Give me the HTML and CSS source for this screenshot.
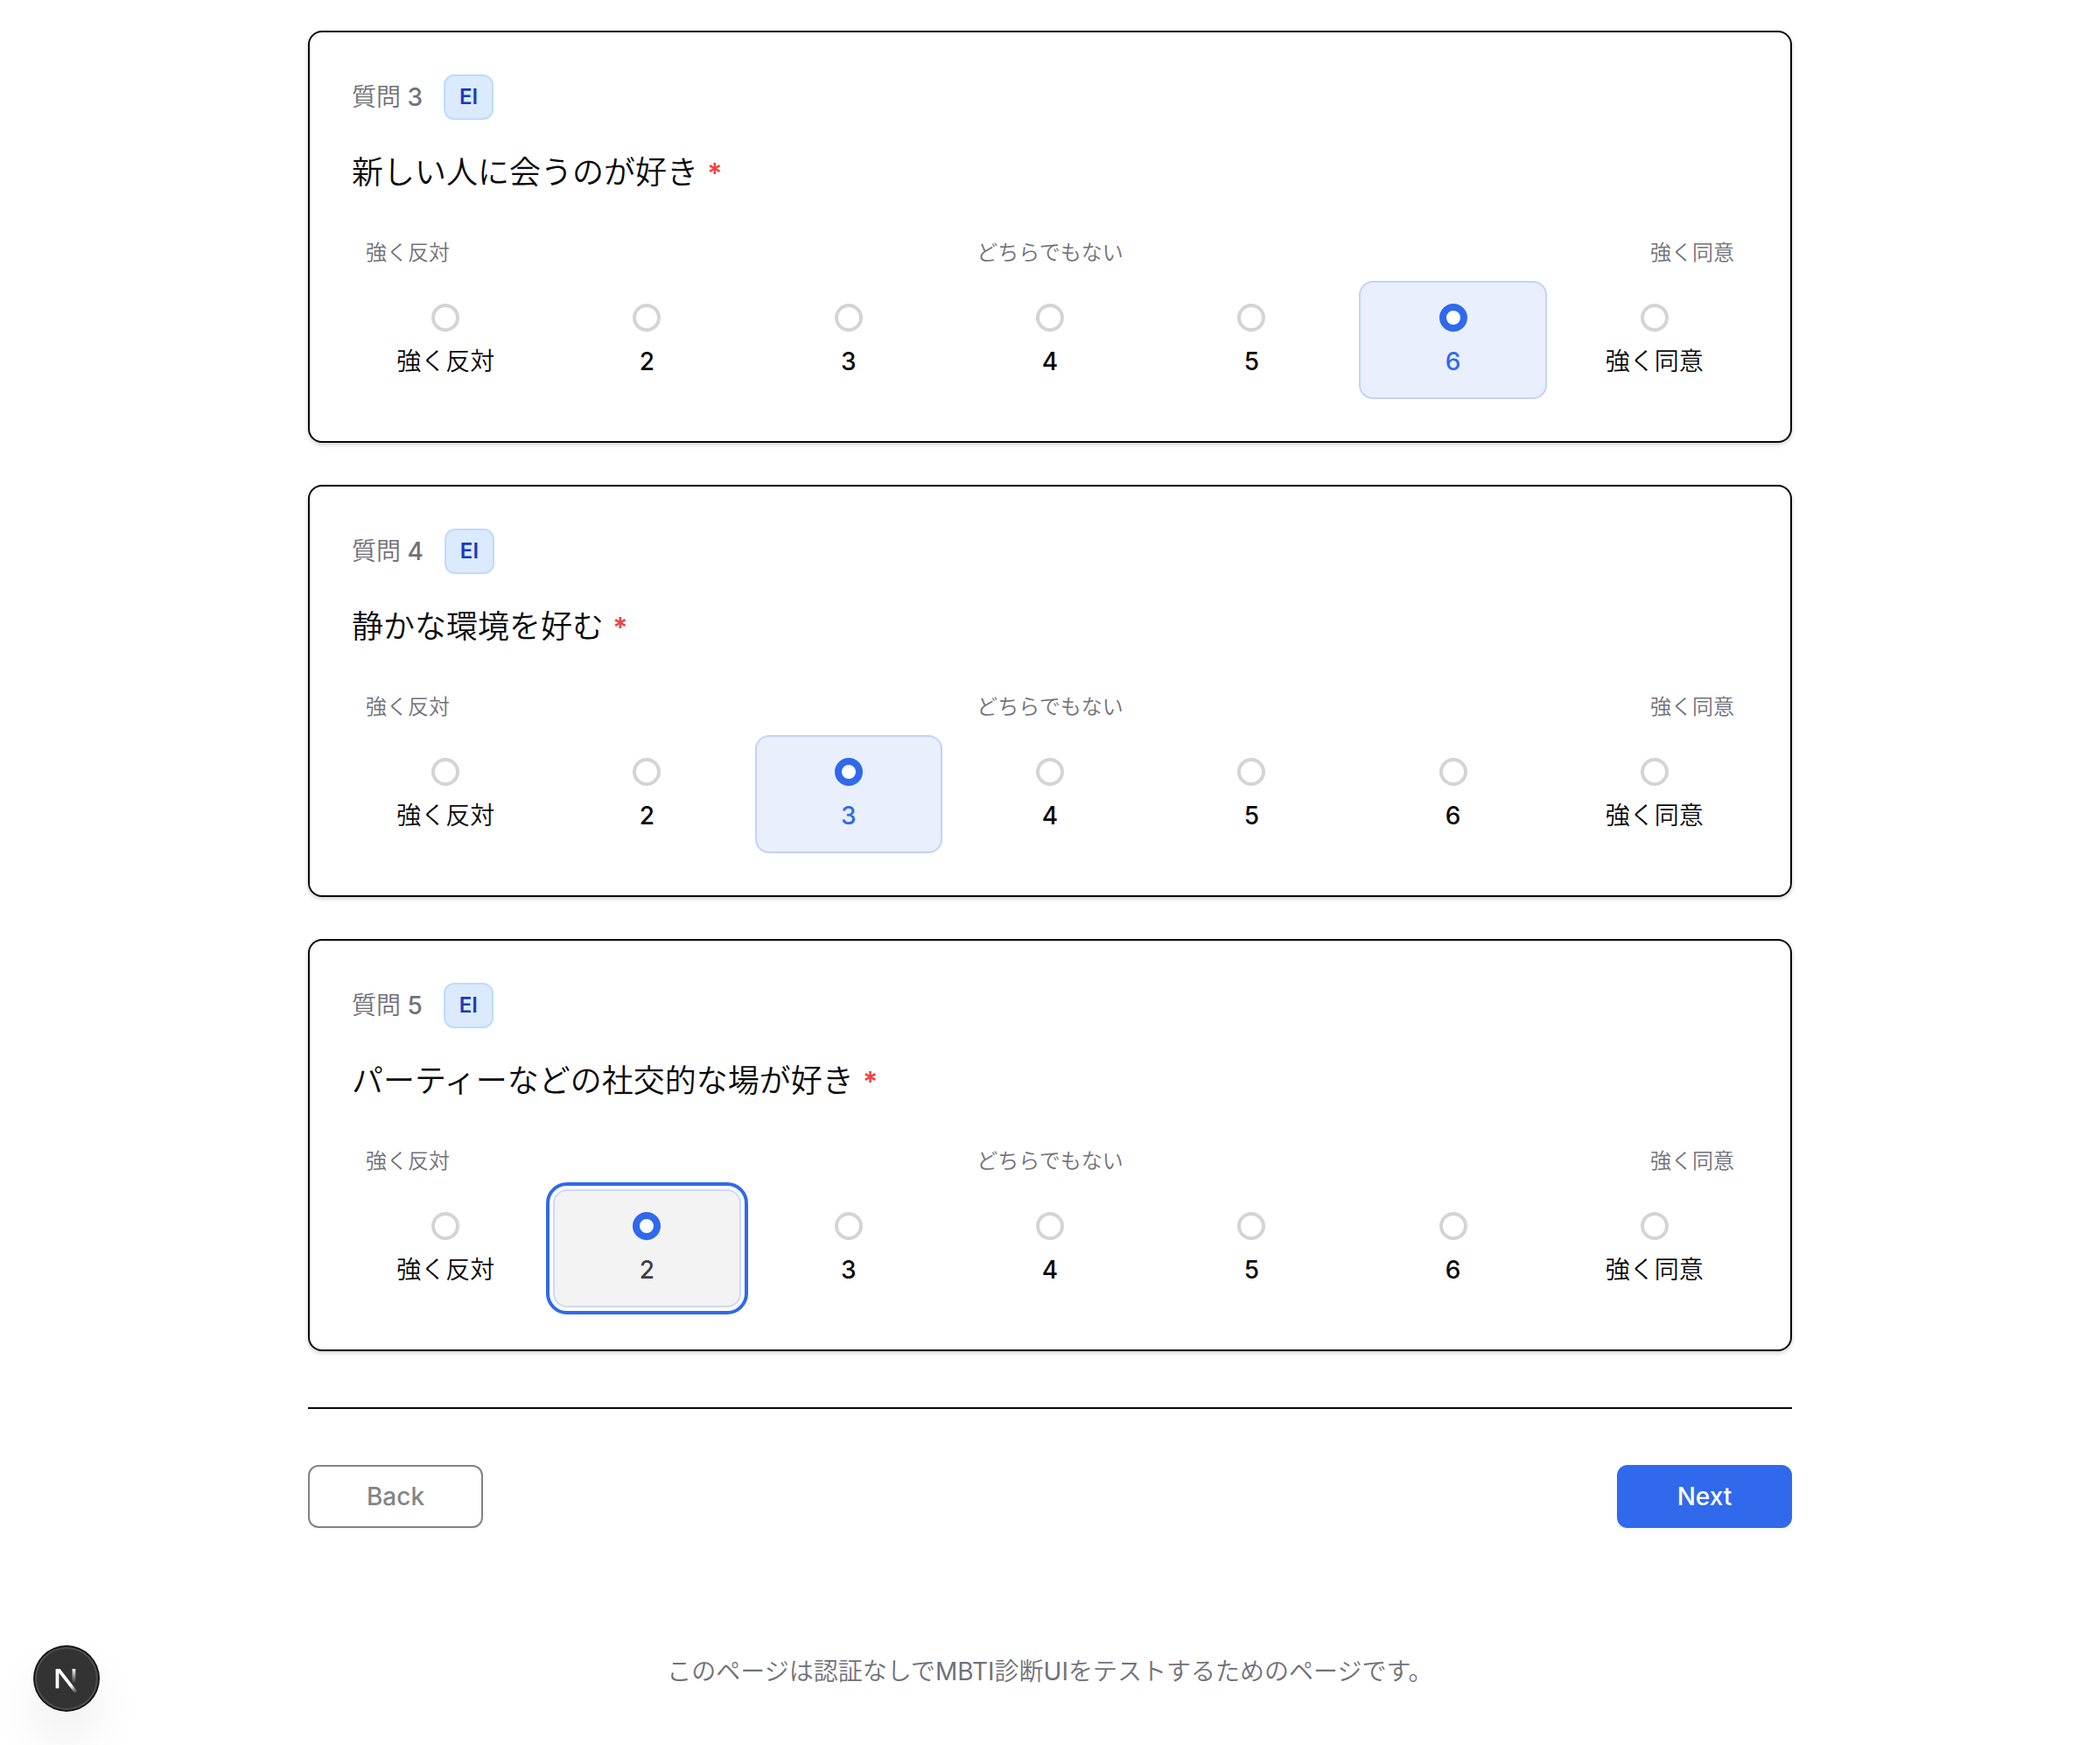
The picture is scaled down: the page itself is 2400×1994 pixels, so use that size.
FILE: index.html
```html
<!DOCTYPE html>
<html lang="ja">
<head>
<meta charset="utf-8">
<meta name="viewport" content="width=device-width, initial-scale=1">
<title>MBTI診断</title>
<link rel="stylesheet" href="styles.css">
</head>
<body>
<main class="page">
  <form class="questions">
    <section class="card">
      <div class="card-head"><span class="number"><span class="ja">質問</span> 3</span><span class="badge">EI</span></div>
      <h2 class="title" id="q3">新しい人に会うのが好き <span class="required">*</span></h2>
      <div class="legend"><span>強く反対</span><span>どちらでもない</span><span>強く同意</span></div>
      <div class="scale" role="radiogroup" aria-labelledby="q3">
        <label class="option ja"><input type="radio" name="q3" value="1">強く反対</label>
        <label class="option"><input type="radio" name="q3" value="2">2</label>
        <label class="option"><input type="radio" name="q3" value="3">3</label>
        <label class="option"><input type="radio" name="q3" value="4">4</label>
        <label class="option"><input type="radio" name="q3" value="5">5</label>
        <label class="option selected"><input type="radio" name="q3" value="6" checked>6</label>
        <label class="option ja"><input type="radio" name="q3" value="7">強く同意</label>
      </div>
    </section>

    <section class="card">
      <div class="card-head"><span class="number"><span class="ja">質問</span> 4</span><span class="badge">EI</span></div>
      <h2 class="title" id="q4">静かな環境を好む <span class="required">*</span></h2>
      <div class="legend"><span>強く反対</span><span>どちらでもない</span><span>強く同意</span></div>
      <div class="scale" role="radiogroup" aria-labelledby="q4">
        <label class="option ja"><input type="radio" name="q4" value="1">強く反対</label>
        <label class="option"><input type="radio" name="q4" value="2">2</label>
        <label class="option selected"><input type="radio" name="q4" value="3" checked>3</label>
        <label class="option"><input type="radio" name="q4" value="4">4</label>
        <label class="option"><input type="radio" name="q4" value="5">5</label>
        <label class="option"><input type="radio" name="q4" value="6">6</label>
        <label class="option ja"><input type="radio" name="q4" value="7">強く同意</label>
      </div>
    </section>

    <section class="card">
      <div class="card-head"><span class="number"><span class="ja">質問</span> 5</span><span class="badge">EI</span></div>
      <h2 class="title" id="q5">パーティーなどの社交的な場が好き <span class="required">*</span></h2>
      <div class="legend"><span>強く反対</span><span>どちらでもない</span><span>強く同意</span></div>
      <div class="scale" role="radiogroup" aria-labelledby="q5">
        <label class="option ja"><input type="radio" name="q5" value="1">強く反対</label>
        <label class="option selected focused"><input type="radio" name="q5" value="2" checked>2</label>
        <label class="option"><input type="radio" name="q5" value="3">3</label>
        <label class="option"><input type="radio" name="q5" value="4">4</label>
        <label class="option"><input type="radio" name="q5" value="5">5</label>
        <label class="option"><input type="radio" name="q5" value="6">6</label>
        <label class="option ja"><input type="radio" name="q5" value="7">強く同意</label>
      </div>
    </section>
  </form>

  <nav class="actions">
    <button class="button back" type="button" disabled>Back</button>
    <button class="button next" type="button">Next</button>
  </nav>

  <footer class="note">このページは認証なしで<span class="latin">MBTI</span>診断<span class="latin">UI</span>をテストするためのページです。</footer>
</main>

<button class="dev-button" type="button" aria-label="Next.js">
  <svg viewBox="0 0 36 36" fill="none" aria-hidden="true">
    <defs>
      <linearGradient id="diagonal" x1="9.956" y1="11.123" x2="15.478" y2="17.967" gradientUnits="userSpaceOnUse">
        <stop stop-color="#fff"/><stop offset="0.604" stop-color="#fff" stop-opacity="0"/><stop offset="1" stop-color="#fff" stop-opacity="0"/>
      </linearGradient>
      <linearGradient id="stem" x1="11.822" y1="1.4" x2="11.791" y2="9.625" gradientUnits="userSpaceOnUse">
        <stop stop-color="#fff"/><stop offset="1" stop-color="#fff" stop-opacity="0"/>
      </linearGradient>
      <mask id="cut"><rect width="20" height="20" fill="#fff"/><rect width="5" height="1.5" fill="#000"/></mask>
    </defs>
    <g transform="translate(10.4 11)" stroke-width="1.86">
      <path d="M13.3 15.2 L2.34 1 V12.6" stroke="url(#diagonal)" mask="url(#cut)"/>
      <path d="M11.825 1.5 V13.1" stroke="url(#stem)"/>
    </g>
  </svg>
</button>
</body>
</html>
```

FILE: styles.css
```css
*,
*::before,
*::after {
  box-sizing: border-box;
}

:root {
  --ink: #09090b;
  --muted: #71717a;
  --primary: #3069ec;
}

body {
  margin: 0;
  background: #fff;
  color: var(--ink);
  font-family: Inter, "Noto Sans CJK JP", sans-serif;
  font-size: 28px;
  line-height: 40px;
}

.page {
  max-width: 1792px;
  margin: 0 auto;
  padding: 35px 48px 64px;
}

.questions {
  display: flex;
  flex-direction: column;
  gap: 48px;
}

.card {
  padding: 48px;
  border: 2px solid var(--ink);
  border-radius: 16px;
  background: #fff;
  box-shadow: 0 2px 6px rgba(0, 0, 0, 0.1), 0 2px 4px rgba(0, 0, 0, 0.1);
}

.card-head {
  display: flex;
  align-items: center;
  gap: 24px;
}

.number {
  color: var(--muted);
  font-weight: 500;
}

.ja {
  font-weight: 350;
}

.latin {
  font-weight: 400;
}

.badge {
  padding: 8px 16px;
  border: 2px solid #bfdbfe;
  border-radius: 12px;
  background: #dbeafe;
  color: #193cb8;
  font-size: 24px;
  font-weight: 600;
  line-height: 32px;
}

.title {
  margin: 32px 0 48px;
  font-size: 36px;
  font-weight: 350;
  line-height: 56px;
}

.required {
  color: #ef4444;
  font-size: 32px;
  font-weight: 600;
  line-height: 32px;
}

.legend {
  display: flex;
  justify-content: space-between;
  padding: 0 16px;
  margin-bottom: 16px;
  color: var(--muted);
  font-size: 24px;
  font-weight: 350;
  line-height: 32px;
}

.scale {
  display: grid;
  grid-template-columns: repeat(7, 1fr);
  gap: 16px;
}

.option {
  display: flex;
  flex-direction: column;
  align-items: center;
  gap: 16px;
  padding: 24px 24px 22px;
  border: 2px solid transparent;
  border-radius: 16px;
  font-weight: 500;
  line-height: 37px;
  white-space: nowrap;
  cursor: pointer;
}

.option.ja {
  font-weight: 350;
}

.option input {
  appearance: none;
  width: 32px;
  height: 32px;
  margin: 0;
  border: 4px solid #d4d4d6;
  border-radius: 50%;
  background: #fff;
}

.option input:checked {
  border: 8px solid var(--primary);
}

.option.selected {
  border-color: #c3d2f9;
  background: #e9effd;
  color: var(--primary);
}

.option.focused {
  border-color: #cdd9f6;
  background: #f3f3f4;
  color: #3f3f46;
  outline: 4px solid var(--primary);
  outline-offset: 4px;
}

.actions {
  display: flex;
  justify-content: space-between;
  margin-top: 64px;
  padding-top: 64px;
  border-top: 2px solid var(--ink);
}

.button {
  min-width: 200px;
  height: 72px;
  border: 2px solid var(--primary);
  border-radius: 12px;
  font: inherit;
  font-weight: 500;
  box-shadow: 0 2px 4px rgba(0, 0, 0, 0.05);
}

.back {
  border-color: var(--ink);
  background: #fff;
  color: var(--ink);
  opacity: 0.5;
}

.next {
  background: var(--primary);
  color: #fff;
}

.note {
  margin-top: 144px;
  color: var(--muted);
  font-weight: 350;
  text-align: center;
}

.dev-button {
  position: fixed;
  bottom: 40px;
  left: 40px;
  width: 72px;
  height: 72px;
  padding: 0;
  border: 0;
  border-radius: 50%;
  background: #333;
  box-shadow: 0 0 0 2px #171717, inset 0 0 0 2px rgba(255, 255, 255, 0.14), 0 32px 64px -16px rgba(0, 0, 0, 0.24);
}

.dev-button svg {
  display: block;
  width: 72px;
  height: 72px;
}
```
